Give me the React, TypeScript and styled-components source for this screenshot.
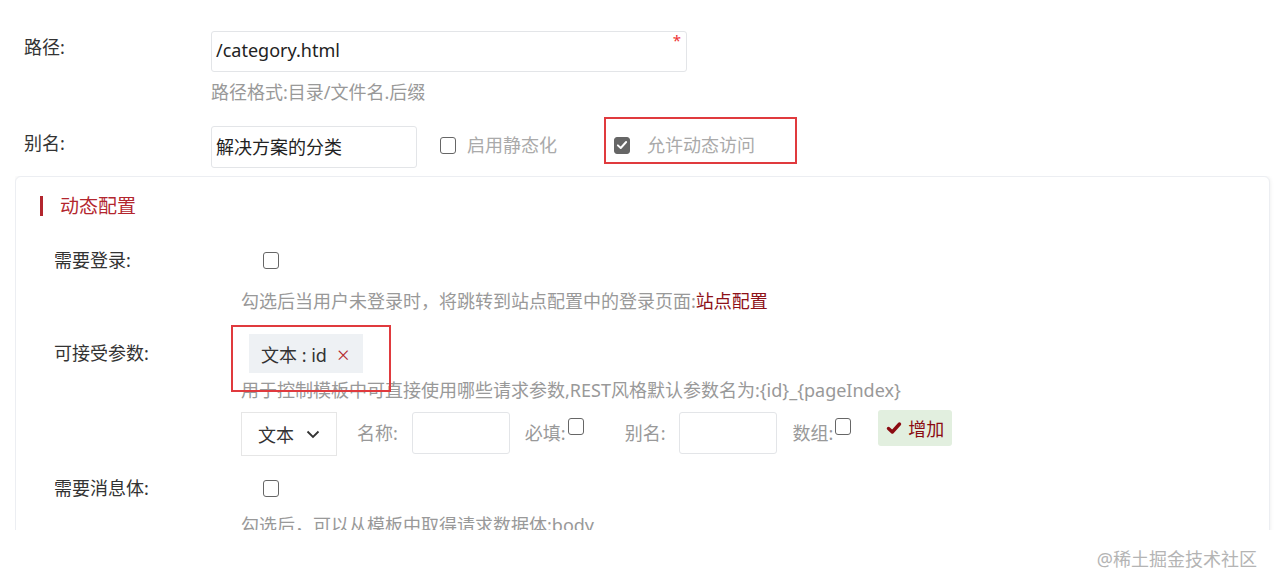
import React from "react";
import styled, { createGlobalStyle } from "styled-components";

const Global = createGlobalStyle`
  html, body { margin: 0; padding: 0; background: #fff; }
  body {
    font-family: "Noto Sans", "Noto Sans CJK SC", sans-serif;
    font-size: 18px;
    color: #333;
  }
  * { box-sizing: border-box; }
`;

const Page = styled.div`
  width: 1274px;
  height: 588px;
  overflow: hidden;
  padding-top: 31px;
  position: relative;
`;

const FormRow = styled.div<{ $mt?: number }>`
  display: grid;
  grid-template-columns: 187px 1fr;
  padding-left: 24px;
  margin-top: ${(p) => p.$mt ?? 0}px;
`;

const Label = styled.div<{ $pt?: number }>`
  line-height: 24px;
  padding-top: ${(p) => p.$pt ?? 0}px;
  color: #333;
  white-space: nowrap;
`;

const Field = styled.div`
  display: flex;
  flex-direction: column;
  align-items: flex-start;
`;

const Inline = styled.div`
  display: flex;
  align-items: center;
`;

const TextInput = styled.div<{ $w: number; $h: number }>`
  position: relative;
  width: ${(p) => p.$w}px;
  height: ${(p) => p.$h}px;
  border: 1px solid #e3e5e8;
  border-radius: 3px;
  padding: 0 4px 3px;
  display: flex;
  align-items: center;
  color: #222;
  background: #fff;
`;

const Required = styled.span`
  position: absolute;
  top: 1px;
  right: 5px;
  color: #e33;
  font-size: 15px;
  line-height: 15px;
`;

const Hint = styled.div<{ $mt?: number }>`
  color: #999;
  line-height: 24px;
  margin-top: ${(p) => p.$mt ?? 0}px;
  white-space: nowrap;
`;

const LinkText = styled.span`
  color: #8e1118;
`;

const Box = styled.span<{ $checked?: boolean }>`
  display: inline-flex;
  align-items: center;
  justify-content: center;
  width: 16px;
  height: 17px;
  border: 1.5px solid #666;
  border-radius: 3px;
  background: ${(p) => (p.$checked ? "#666" : "#fff")};
  flex: none;
`;

const CheckOption = styled.label<{ $ml: number; $gap: number }>`
  display: flex;
  align-items: center;
  gap: ${(p) => p.$gap}px;
  margin-left: ${(p) => p.$ml}px;
  color: #aaa;
  line-height: 24px;
  position: relative;
  margin-top: -4px;
`;

const Annotation = styled.div`
  position: absolute;
  border: 2px solid #e03a3e;
  pointer-events: none;
`;

const PanelClip = styled.div`
  margin-top: 8px;
  margin-left: 15px;
  width: 1259px;
  height: 354px;
  overflow: hidden;
  padding: 0 4px 0 0;
`;

const Panel = styled.div`
  width: 1255px;
  height: 420px;
  background: #fff;
  border: 1px solid #eceef2;
  border-radius: 6px;
  box-shadow: 0 0 4px rgba(0, 0, 0, 0.08);
  padding-top: 17px;
  position: relative;
`;

const Title = styled.div`
  display: flex;
  align-items: center;
  margin-left: 24px;
  color: #b3262e;
  font-size: 19px;
  line-height: 24px;
  gap: 17px;
  &::before {
    content: "";
    width: 3px;
    height: 20px;
    background: #b3262e;
  }
`;

const PRow = styled.div<{ $mt?: number }>`
  display: grid;
  grid-template-columns: 187px 1fr;
  padding-left: 38px;
  margin-top: ${(p) => p.$mt ?? 0}px;
  position: relative;
`;

const CheckCell = styled.div`
  padding-left: 22px;
  height: 24px;
  display: flex;
  align-items: center;
`;

const Tag = styled.div`
  margin-left: 8px;
  height: 39px;
  padding: 0 14px 0 12px;
  background: #eef1f4;
  display: flex;
  align-items: center;
  gap: 10px;
  color: #333;
`;

const TagClose = styled.span`
  color: #b3262e;
  font-size: 22px;
  line-height: 22px;
  font-weight: 300;
`;

const ParamRow = styled.div`
  display: flex;
  align-items: center;
  margin-top: 7px;
  height: 46px;
`;

const Select = styled.div`
  width: 96px;
  height: 44px;
  border: 1px solid #e6e6e6;
  display: flex;
  align-items: center;
  padding-left: 16px;
  gap: 12px;
  color: #333;
  margin-top: 4px;
`;

const SmallLabel = styled.span<{ $ml: number }>`
  color: #999;
  margin-left: ${(p) => p.$ml}px;
  white-space: nowrap;
`;

const SmallInput = styled.div<{ $ml: number }>`
  width: 98px;
  height: 42px;
  border: 1px solid #e3e5e8;
  border-radius: 3px;
  margin-left: ${(p) => p.$ml}px;
  margin-top: 2px;
`;

const InlineBox = styled(Box)`
  margin-left: 2px;
  margin-top: -11px;
`;

const AddButton = styled.div`
  margin-left: 27px;
  height: 36px;
  width: 74px;
  background: #e2efdf;
  border-radius: 3px;
  display: flex;
  align-items: center;
  justify-content: center;
  gap: 6px;
  color: #8b0b12;
  margin-top: -8px;
`;

const Watermark = styled.div`
  text-align: right;
  padding-right: 17px;
  margin-top: 17px;
  color: #b4b4b4;
  font-size: 18px;
  line-height: 24px;
`;

const CheckMark = ({ color, size, weight }: { color: string; size: number; weight: number }) => (
  <svg width={size} height={size} viewBox="0 0 16 16">
    <path d="M2.5 8.5 L6.3 12 L13.5 4" fill="none" stroke={color} strokeWidth={weight} strokeLinecap="round" strokeLinejoin="round" />
  </svg>
);

const Chevron = () => (
  <svg width="14" height="9" viewBox="0 0 14 9">
    <path d="M1.5 1.5 L7 7 L12.5 1.5" fill="none" stroke="#333" strokeWidth="1.8" />
  </svg>
);

export default function App() {
  return (
    <>
      <Global />
      <Page>
        <FormRow>
          <Label $pt={4}>路径:</Label>
          <Field>
            <TextInput $w={476} $h={41}>
              /category.html
              <Required>*</Required>
            </TextInput>
            <Hint $mt={8}>路径格式:目录/文件名.后缀</Hint>
          </Field>
        </FormRow>
        <FormRow $mt={22}>
          <Label $pt={5}>别名:</Label>
          <Inline>
            <TextInput $w={206} $h={42}>解决方案的分类</TextInput>
            <CheckOption $ml={23} $gap={11}>
              <Box />
              启用静态化
            </CheckOption>
            <CheckOption $ml={57} $gap={17}>
              <Box $checked>
                <CheckMark color="#fff" size={12} weight={2.6} />
              </Box>
              允许动态访问
              <Annotation style={{ left: -10, top: -16, width: 193, height: 47 }} />
            </CheckOption>
          </Inline>
        </FormRow>
        <PanelClip>
          <Panel>
            <Title>动态配置</Title>
            <PRow $mt={30}>
              <Label>需要登录:</Label>
              <CheckCell>
                <Box />
              </CheckCell>
            </PRow>
            <PRow $mt={17}>
              <div />
              <Hint>
                勾选后当用户未登录时，将跳转到站点配置中的登录页面:<LinkText>站点配置</LinkText>
              </Hint>
            </PRow>
            <PRow $mt={21}>
              <Label style={{ paddingTop: 7 }}>可接受参数:</Label>
              <Field>
                <Tag>
                  文本 : id <TagClose>×</TagClose>
                </Tag>
                <Hint $mt={5}>用于控制模板中可直接使用哪些请求参数,REST风格默认参数名为:{"{id}_{pageIndex}"}</Hint>
                <ParamRow>
                  <Select>
                    文本 <Chevron />
                  </Select>
                  <SmallLabel $ml={20}>名称:</SmallLabel>
                  <SmallInput $ml={14} />
                  <SmallLabel $ml={15}>必填:</SmallLabel>
                  <InlineBox />
                  <SmallLabel $ml={41}>别名:</SmallLabel>
                  <SmallInput $ml={14} />
                  <SmallLabel $ml={15}>数组:</SmallLabel>
                  <InlineBox />
                  <AddButton>
                    <CheckMark color="#8b0b12" size={16} weight={3.4} />
                    增加
                  </AddButton>
                </ParamRow>
              </Field>
              <Annotation style={{ left: 215, top: -9, width: 160, height: 67 }} />
            </PRow>
            <PRow $mt={21}>
              <Label>需要消息体:</Label>
              <CheckCell>
                <Box />
              </CheckCell>
            </PRow>
            <PRow $mt={13}>
              <div />
              <Hint>勾选后，可以从模板中取得请求数据体:body</Hint>
            </PRow>
          </Panel>
        </PanelClip>
        <Watermark>@稀土掘金技术社区</Watermark>
      </Page>
    </>
  );
}
